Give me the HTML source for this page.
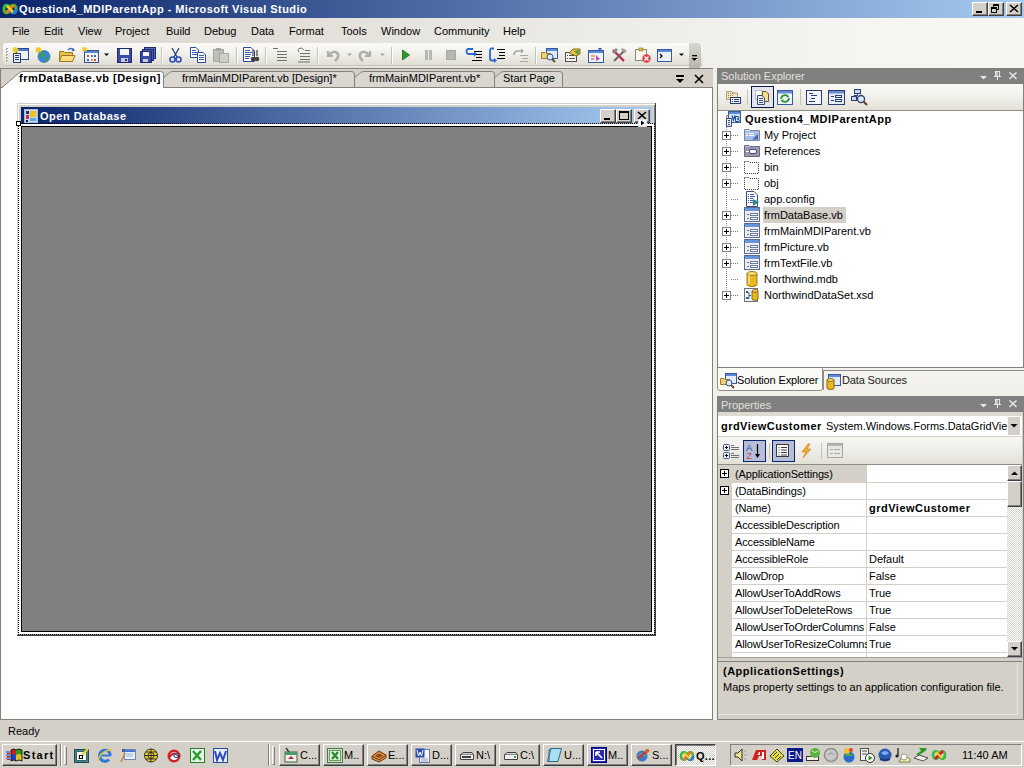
<!DOCTYPE html>
<html><head><meta charset="utf-8"><style>
*{box-sizing:border-box;margin:0;padding:0}
html,body{width:1024px;height:768px;overflow:hidden;background:#D4D0C8;font-family:"Liberation Sans",sans-serif;font-size:11px;color:#000}
.a{position:absolute}
.t{position:absolute;white-space:nowrap;line-height:16px;height:16px}
.b{font-weight:bold}
svg{position:absolute;overflow:visible}
.rz{position:absolute;background:#D4D0C8;border-top:1px solid #fff;border-left:1px solid #fff;border-right:1px solid #404040;border-bottom:1px solid #404040;box-shadow:inset -1px -1px 0 #808080}
</style></head><body>
<div class="a" style="left:0px;top:0px;width:1024px;height:18px;background:linear-gradient(to right,#0A246A,#A6CAF0)"></div>
<svg style="left:2px;top:3px" width="16" height="12" viewBox="0 0 16 12"><path d="M2 6 C2 1,7 1,8 6 C9 11,14 11,14 6 C14 1,9 1,8 6 C7 11,2 11,2 6Z" fill="none" stroke="#3CB83C" stroke-width="3"/><path d="M8 6 C9 11,14 11,14 6" fill="none" stroke="#2E7BD6" stroke-width="3"/><path d="M4 10 L12 2" stroke="#F07820" stroke-width="3"/><path d="M5 3 L11 9" stroke="#F8D020" stroke-width="2.5"/></svg>
<div class="t b" style="left:19px;top:1px;color:#fff;font-size:11px;letter-spacing:0.43px">Question4_MDIParentApp - Microsoft Visual Studio</div>
<div class="rz" style="left:972px;top:2px;width:16px;height:14px"></div>
<svg style="left:972px;top:2px" width="16" height="14" viewBox="0 0 16 14"><rect x="4" y="9" width="6" height="2" fill="#000"/></svg>
<div class="rz" style="left:988px;top:2px;width:16px;height:14px"></div>
<svg style="left:988px;top:2px" width="16" height="14" viewBox="0 0 16 14"><path d="M5.5 7.5 V2.5 H10.5 V7.5 H8.5 M5 3.5 H11" fill="none" stroke="#000"/><rect x="3.5" y="5.5" width="5" height="5" fill="#D4D0C8" stroke="#000"/><path d="M3 6.5 H9" stroke="#000"/></svg>
<div class="rz" style="left:1006px;top:2px;width:16px;height:14px"></div>
<svg style="left:1006px;top:2px" width="16" height="14" viewBox="0 0 16 14"><path d="M4 3l8 7M12 3l-8 7" stroke="#000" stroke-width="1.6"/></svg>
<div class="a" style="left:0px;top:18px;width:1024px;height:50px;background:linear-gradient(to right,#D8D5CD,#E8E6E0 45%,#F5F5F2 85%,#F6F6F3)"></div>
<div class="t " style="left:12px;top:23px;">File</div>
<div class="t " style="left:44px;top:23px;">Edit</div>
<div class="t " style="left:78px;top:23px;">View</div>
<div class="t " style="left:115px;top:23px;">Project</div>
<div class="t " style="left:166px;top:23px;">Build</div>
<div class="t " style="left:204px;top:23px;">Debug</div>
<div class="t " style="left:251px;top:23px;">Data</div>
<div class="t " style="left:289px;top:23px;">Format</div>
<div class="t " style="left:341px;top:23px;">Tools</div>
<div class="t " style="left:381px;top:23px;">Window</div>
<div class="t " style="left:434px;top:23px;">Community</div>
<div class="t " style="left:503px;top:23px;">Help</div>
<div class="a" style="left:3px;top:43px;width:700px;height:22px;border-radius:3px;background:linear-gradient(#FBFAF7,#F3F2ED 40%,#E0DED4);box-shadow:0 1px 0 #C8C5BB"></div>
<svg style="left:6px;top:47px" width="3" height="15" viewBox="0 0 3 15"><rect x="0" y="1" width="2" height="2" fill="#A8A69E"/><rect x="1" y="2" width="1" height="1" fill="#fff"/><rect x="0" y="4" width="2" height="2" fill="#A8A69E"/><rect x="1" y="5" width="1" height="1" fill="#fff"/><rect x="0" y="7" width="2" height="2" fill="#A8A69E"/><rect x="1" y="8" width="1" height="1" fill="#fff"/><rect x="0" y="10" width="2" height="2" fill="#A8A69E"/><rect x="1" y="11" width="1" height="1" fill="#fff"/><rect x="0" y="13" width="2" height="2" fill="#A8A69E"/><rect x="1" y="14" width="1" height="1" fill="#fff"/></svg>
<svg style="left:12px;top:47px" width="16" height="16" viewBox="0 0 16 16"><rect x="4.5" y="1.5" width="12" height="11" fill="#EEF2FA" stroke="#2C4A8A"/><rect x="5" y="2" width="11" height="2" fill="#4A7AD0"/><path d="M0.5 3 H6.5 M3.5 0 V6 M1.3 0.8 L5.7 5.2 M5.7 0.8 L1.3 5.2" stroke="#F0C820" stroke-width="1.3"/><rect x="1.5" y="6.5" width="7" height="9" fill="#E8EEF8" stroke="#2C3E6E"/><path d="M3 8.5h4M3 10.5h4M3 12.5h4" stroke="#2C3E6E"/></svg>
<svg style="left:35px;top:47px" width="16" height="16" viewBox="0 0 16 16"><circle cx="9" cy="9.5" r="6" fill="#3A86D8" stroke="#2A5A9A" stroke-width="0.6"/><path d="M5 6 Q8 5 10 7 Q9 10 6 11 Q4 9 5 6Z M11 11 Q13 9 14.5 10 Q13 14 10 15Z" fill="#3AA04A"/><path d="M0.5 3 H6.5 M3.5 0 V6 M1.3 0.8 L5.7 5.2 M5.7 0.8 L1.3 5.2" stroke="#F0C820" stroke-width="1.3"/></svg>
<svg style="left:59px;top:47px" width="16" height="16" viewBox="0 0 16 16"><path d="M0.5 4.5 H5 L6 5.5 H13.5 V14.5 H0.5Z" fill="#E8C050" stroke="#9A7A20"/><path d="M2.5 8.5 H16 L13.5 14.5 H0.5Z" fill="#F8DC80" stroke="#9A7A20"/><path d="M9 3 Q12 0 15 3" stroke="#3A6AB0" stroke-width="1.5" fill="none"/><path d="M14 1 L16 4 L12.5 4Z" fill="#3A6AB0"/></svg>
<svg style="left:82px;top:47px" width="17" height="16" viewBox="0 0 17 16"><rect x="2.5" y="3.5" width="14" height="12" fill="#EEF2FA" stroke="#3A4E80"/><rect x="3" y="4" width="13" height="2" fill="#5A86D0"/><rect x="5" y="8" width="2" height="2" fill="#E04040"/><rect x="9" y="8" width="2" height="2" fill="#40A040"/><rect x="12" y="8" width="2" height="2" fill="#4060D0"/><rect x="5" y="12" width="2" height="2" fill="#4060D0"/><rect x="9" y="12" width="2" height="2" fill="#E0A020"/><rect x="12" y="12" width="2" height="2" fill="#E04040"/><path d="M0 2 H5 M2.5 0 V4.5 M0.5 0.5 L4.5 4 M4.5 0.5 L0.5 4" stroke="#F0C820" stroke-width="1.1"/></svg>
<svg style="left:104px;top:53px" width="6" height="4" viewBox="0 0 6 4"><path d="M0 0.5 H5 L2.5 3Z" fill="#000"/></svg>
<svg style="left:117px;top:47px" width="15" height="16" viewBox="0 0 15 16"><rect x="0.5" y="1.5" width="14" height="14" fill="#3A4AA8" stroke="#202A6A"/><rect x="3" y="2" width="9" height="6" fill="#F4F4F8"/><rect x="4" y="11" width="7" height="4" fill="#C8CCE0"/><rect x="8" y="12" width="2" height="2" fill="#202A6A"/></svg>
<svg style="left:140px;top:47px" width="16" height="16" viewBox="0 0 16 16"><rect x="4.5" y="0.5" width="11" height="11" fill="#5A6AC0" stroke="#202A6A"/><rect x="2.5" y="2.5" width="11" height="11" fill="#4A5AB8" stroke="#202A6A"/><rect x="0.5" y="4.5" width="11" height="11" fill="#3A4AA8" stroke="#202A6A"/><rect x="3" y="5" width="6" height="4" fill="#F4F4F8"/><rect x="3" y="12" width="5" height="3" fill="#C8CCE0"/></svg>
<div class="a" style="left:161px;top:47px;width:1px;height:17px;background:#C5C2B8;border-right:1px solid #fff;width:2px"></div>
<svg style="left:169px;top:47px" width="13" height="16" viewBox="0 0 13 16"><path d="M3 1 L8 10 M10 1 L5 10" stroke="#2A3A8A" stroke-width="1.3"/><circle cx="3.5" cy="12.5" r="2.5" fill="none" stroke="#2A4AC0" stroke-width="1.6"/><circle cx="9.5" cy="12.5" r="2.5" fill="none" stroke="#2A4AC0" stroke-width="1.6"/></svg>
<svg style="left:190px;top:47px" width="16" height="16" viewBox="0 0 16 16"><path d="M0.5 0.5 H6 L8.5 3 V10.5 H0.5Z" fill="#fff" stroke="#2A4A9A"/><path d="M2 3.5h4M2 5.5h5M2 7.5h5" stroke="#3A5AB0"/><path d="M7.5 5.5 H13 L15.5 8 V15.5 H7.5Z" fill="#fff" stroke="#2A4A9A"/><path d="M9 8.5h5M9 10.5h5M9 12.5h5" stroke="#3A5AB0"/></svg>
<svg style="left:213px;top:47px" width="17" height="16" viewBox="0 0 17 16"><rect x="0.5" y="2.5" width="10" height="12" fill="#C0BEB8" stroke="#A8A6A0"/><rect x="3" y="1" width="5" height="3" fill="#A8A6A0"/><rect x="6.5" y="6.5" width="9" height="9" fill="#D0CEC8" stroke="#A8A6A0"/></svg>
<div class="a" style="left:236px;top:47px;width:1px;height:17px;background:#C5C2B8;border-right:1px solid #fff;width:2px"></div>
<svg style="left:243px;top:47px" width="17" height="16" viewBox="0 0 17 16"><path d="M0.5 0.5 H8 L11.5 4 V14.5 H0.5Z" fill="#fff" stroke="#2A4A9A"/><path d="M2 3.5h5M2 5.5h7M2 7.5h6M2 9.5h5M2 11.5h4" stroke="#3A5AB0"/><circle cx="10" cy="12" r="2.3" fill="#404040"/><circle cx="14" cy="12" r="2.3" fill="#404040"/><path d="M10 9 V3 M14 9 V3" stroke="#404040" stroke-width="1.2"/></svg>
<div class="a" style="left:265px;top:47px;width:1px;height:17px;background:#C5C2B8;border-right:1px solid #fff;width:2px"></div>
<svg style="left:273px;top:47px" width="14" height="16" viewBox="0 0 14 16"><path d="M0 1.5 H5 M4 4.5 H14 M4 7.5 H14 M4 10.5 H14 M4 13.5 H14" stroke="#707070" stroke-width="1"/></svg>
<svg style="left:296px;top:47px" width="14" height="16" viewBox="0 0 14 16"><path d="M3 5 Q1 3 3 1.5 Q6 0 8 3" stroke="#707070" fill="none"/><path d="M4 6.5 H14 M4 9.5 H14 M4 12.5 H14 M2 15 H14" stroke="#707070"/><path d="M9 3.5 H14" stroke="#707070"/></svg>
<div class="a" style="left:317px;top:47px;width:1px;height:17px;background:#C5C2B8;border-right:1px solid #fff;width:2px"></div>
<svg style="left:325px;top:47px" width="15" height="16" viewBox="0 0 15 16"><path d="M3 4 V9 H8" fill="none" stroke="#B0AEA8" stroke-width="2.2"/><path d="M4 8 Q10 2 13 7 Q14 11 10 14" fill="none" stroke="#B0AEA8" stroke-width="2.6"/></svg>
<svg style="left:347px;top:53px" width="6" height="4" viewBox="0 0 6 4"><path d="M0 0.5 H5 L2.5 3Z" fill="#A8A6A0"/></svg>
<svg style="left:358px;top:47px" width="15" height="16" viewBox="0 0 15 16"><path d="M12 4 V9 H7" fill="none" stroke="#B0AEA8" stroke-width="2.2"/><path d="M11 8 Q5 2 2 7 Q1 11 5 14" fill="none" stroke="#B0AEA8" stroke-width="2.6"/></svg>
<svg style="left:380px;top:53px" width="6" height="4" viewBox="0 0 6 4"><path d="M0 0.5 H5 L2.5 3Z" fill="#A8A6A0"/></svg>
<div class="a" style="left:391px;top:47px;width:1px;height:17px;background:#C5C2B8;border-right:1px solid #fff;width:2px"></div>
<svg style="left:401px;top:47px" width="10" height="16" viewBox="0 0 10 16"><path d="M1.5 3 L8.5 8 L1.5 13Z" fill="#2A9A2A" stroke="#1A6A1A" stroke-width="0.8"/></svg>
<svg style="left:424px;top:47px" width="9" height="16" viewBox="0 0 9 16"><rect x="1" y="3" width="3" height="10" fill="#B8B6B0"/><rect x="5" y="3" width="3" height="10" fill="#B8B6B0"/></svg>
<svg style="left:446px;top:47px" width="10" height="16" viewBox="0 0 10 16"><rect x="0.5" y="3.5" width="9" height="9" fill="#B8B6B0" stroke="#A8A6A0"/></svg>
<svg style="left:466px;top:47px" width="16" height="16" viewBox="0 0 16 16"><path d="M7 2 H2.5 Q0.5 2 0.5 4.5 Q0.5 7 3 7 H9" fill="none" stroke="#2A6AD0" stroke-width="1.8"/><path d="M8 4 L11 7 L8 10Z" fill="#2A6AD0"/><path d="M8 4.5 H16 M10 7.5 H16 M10 10.5 H16 M6 13.5 H16" stroke="#000" stroke-width="1.2"/></svg>
<svg style="left:489px;top:47px" width="16" height="16" viewBox="0 0 16 16"><path d="M5 1.5 H2.5 Q1 1.5 1 3.5 V11.5 Q1 13.5 3 13.5 H6" fill="none" stroke="#2A6AD0" stroke-width="1.8"/><path d="M5 11 L8 13.5 L5 16Z" fill="#2A6AD0"/><path d="M8 2.5 H16 M10 5.5 H16 M10 8.5 H16 M8 11.5 H16" stroke="#000" stroke-width="1.2"/></svg>
<svg style="left:512px;top:47px" width="16" height="16" viewBox="0 0 16 16"><path d="M2 8 Q2 4 6 4 H11" fill="none" stroke="#A8A6A0" stroke-width="1.6"/><path d="M9 1.5 L12 4 L9 6.5Z" fill="#A8A6A0"/><path d="M8 8.5 H16 M10 11.5 H16 M8 14.5 H16" stroke="#A8A6A0" stroke-width="1.2"/></svg>
<div class="a" style="left:535px;top:47px;width:1px;height:17px;background:#C5C2B8;border-right:1px solid #fff;width:2px"></div>
<svg style="left:541px;top:47px" width="17" height="16" viewBox="0 0 17 16"><rect x="5.5" y="1.5" width="11" height="10" fill="#E0EAFA" stroke="#3A5AA0"/><rect x="6" y="2" width="10" height="2" fill="#5A8AD8"/><path d="M0.5 5.5 H4 L5 6.5 H9.5 V11.5 H0.5Z" fill="#F0D070" stroke="#9A8030"/><circle cx="9" cy="10" r="3" fill="#D8ECFF" stroke="#405070"/><path d="M11 12 L14 15" stroke="#6A4A30" stroke-width="2"/></svg>
<svg style="left:564px;top:47px" width="17" height="16" viewBox="0 0 17 16"><rect x="1.5" y="5.5" width="11" height="9" fill="#F4F4F0" stroke="#505050"/><path d="M3 8.5h1M5 8.5h6M3 11.5h1M5 11.5h6" stroke="#505050"/><path d="M5 6 L9 2 H16 V7 L12 9Z" fill="#E8C040" stroke="#8A7020"/><path d="M10 4 L16 3 L14 8" fill="#5A9A3A"/></svg>
<svg style="left:588px;top:47px" width="16" height="16" viewBox="0 0 16 16"><rect x="0.5" y="3.5" width="15" height="12" fill="#EEF2FA" stroke="#3A5AA0"/><rect x="1" y="4" width="14" height="2" fill="#5A8AD8"/><path d="M3 9 H7 M3 12 H6" stroke="#D04040"/><path d="M8 8 L12 12 L8 14Z" fill="#C050C0"/><path d="M10 1 L14 1 L12 5Z" fill="#3A6AB0"/><path d="M4 7 L7 10 L4 10Z" fill="#E0C040"/></svg>
<svg style="left:611px;top:47px" width="16" height="16" viewBox="0 0 16 16"><path d="M2 3 L13 14" stroke="#C02040" stroke-width="2.2"/><path d="M14 3 L3 14" stroke="#6A6A6A" stroke-width="2"/><path d="M1 5 L5 1 L7 3 L3 7Z" fill="#8A8A8A"/><path d="M11 1 L16 4 L14 6 L10 3Z" fill="#A0A0A0"/></svg>
<svg style="left:635px;top:47px" width="16" height="16" viewBox="0 0 16 16"><rect x="0.5" y="2.5" width="11" height="11" fill="#F8F6EE" stroke="#8A8A80"/><rect x="4" y="1" width="4" height="3" fill="#E8C040" stroke="#8A7020" stroke-width="0.6"/><circle cx="11.5" cy="11.5" r="4.2" fill="#E04040"/><path d="M9.5 9.5 L13.5 13.5 M13.5 9.5 L9.5 13.5" stroke="#fff" stroke-width="1.3"/></svg>
<svg style="left:657px;top:47px" width="15" height="16" viewBox="0 0 15 16"><rect x="0.5" y="2.5" width="14" height="12" fill="#EEF2FA" stroke="#3A5AA0"/><rect x="1" y="3" width="13" height="2" fill="#5A8AD8"/><path d="M3 7 L5 9 L3 11" stroke="#000" fill="none" stroke-width="1.2"/></svg>
<svg style="left:679px;top:53px" width="6" height="4" viewBox="0 0 6 4"><path d="M0 0.5 H5 L2.5 3Z" fill="#000"/></svg>
<div class="a" style="left:689px;top:43px;width:12px;height:25px;background:linear-gradient(#D8D6CE,#B8B6AE);border-radius:0 3px 3px 0"></div>
<svg style="left:691px;top:55px" width="8" height="9" viewBox="0 0 8 9"><rect x="1" y="0" width="5" height="1.3" fill="#000"/><path d="M0.5 3 H6.5 L3.5 6Z" fill="#000"/><path d="M4 6 L6 4" stroke="#fff" stroke-width="0.8"/></svg>
<div class="a" style="left:0px;top:68px;width:713px;height:20px;background:#D4D0C8;border-top:1px solid #858178"></div>
<svg style="left:0px;top:0px" width="713" height="90" viewBox="0 0 713 90"><path d="M483 87.5 L499.5 73.5 Q501.5 71.5 504 71.5 L559.5 71.5 Q562.5 71.5 562.5 74 L562.5 87.5" fill="#DAD7D0" stroke="#858178" stroke-width="1"/><path d="M343 87.5 L359.5 73.5 Q361.5 71.5 364 71.5 L491.5 71.5 Q494.5 71.5 494.5 74 L494.5 87.5" fill="#DAD7D0" stroke="#858178" stroke-width="1"/><path d="M152 87.5 L168.5 73.5 Q170.5 71.5 173 71.5 L351.5 71.5 Q354.5 71.5 354.5 74 L354.5 87.5" fill="#DAD7D0" stroke="#858178" stroke-width="1"/><path d="M0 87.5 H713" stroke="#858178"/><path d="M2 87.5 L18.5 73.5 Q20.5 71.5 23 71.5 L160.5 71.5 Q163.5 71.5 163.5 74 L163.5 87.5" fill="#FFFFFF" stroke="#858178" stroke-width="1"/><rect x="3" y="87" width="160" height="2" fill="#fff"/></svg>
<div class="t b" style="left:19px;top:70px;letter-spacing:0.48px">frmDataBase.vb [Design]</div>
<div class="t " style="left:182px;top:70px;">frmMainMDIParent.vb [Design]*</div>
<div class="t " style="left:369px;top:70px;">frmMainMDIParent.vb*</div>
<div class="t " style="left:503px;top:70px;">Start Page</div>
<svg style="left:674px;top:74px" width="12" height="12" viewBox="0 0 12 12"><rect x="2" y="1" width="8" height="2" fill="#000"/><path d="M2 5 H10 L6 9Z" fill="#000"/></svg>
<svg style="left:692px;top:73px" width="14" height="12" viewBox="0 0 14 12"><path d="M3 2 L11 10 M11 2 L3 10" stroke="#000" stroke-width="1.6"/></svg>
<div class="a" style="left:0px;top:68px;width:1px;height:20px;background:#858178"></div>
<div class="a" style="left:0px;top:88px;width:713px;height:632px;background:#fff;border-left:1px solid #858178;border-right:1px solid #858178;border-bottom:1px solid #858178"></div>
<div class="a" style="left:17px;top:103px;width:639px;height:533px;background:#D4D0C8;border-top:1px solid #D4D0C8;border-left:1px solid #D4D0C8;border-right:1px solid #404040;border-bottom:1px solid #404040;box-shadow:inset 1px 1px 0 #fff,inset -1px -1px 0 #808080"></div>
<div class="a" style="left:21px;top:107px;width:631px;height:17px;background:linear-gradient(to right,#0A246A,#A6CAF0)"></div>
<svg style="left:24px;top:109px" width="14" height="14" viewBox="0 0 14 14"><rect x="0.5" y="0.5" width="13" height="13" fill="#C8D8F0" stroke="#A8B8D8"/><rect x="2" y="2" width="3" height="3" fill="#203060"/><rect x="2" y="6" width="3" height="4" fill="#D03040"/><rect x="2" y="11" width="2" height="2" fill="#102040"/><rect x="6" y="2" width="6" height="6" fill="#F0C020"/><rect x="6" y="9" width="6" height="3" fill="#60A8E8"/></svg>
<div class="t b" style="left:40px;top:108px;color:#fff;font-size:11px;letter-spacing:0.5px">Open Database</div>
<div class="rz" style="left:600px;top:109px;width:16px;height:14px"></div>
<svg style="left:600px;top:109px" width="16" height="14" viewBox="0 0 16 14"><rect x="4" y="9" width="6" height="2" fill="#000"/></svg>
<div class="rz" style="left:616px;top:109px;width:16px;height:14px"></div>
<svg style="left:616px;top:109px" width="16" height="14" viewBox="0 0 16 14"><rect x="3.5" y="2.5" width="9" height="8" fill="none" stroke="#000"/><path d="M3.5 3.5h9" stroke="#000"/></svg>
<div class="rz" style="left:634px;top:109px;width:16px;height:14px"></div>
<svg style="left:634px;top:109px" width="16" height="14" viewBox="0 0 16 14"><path d="M4 3l8 7M12 3l-8 7" stroke="#000" stroke-width="1.6"/></svg>
<div class="a" style="left:18px;top:124px;width:638px;height:512px;background:#fff"></div>
<div class="a" style="left:21px;top:126px;width:631px;height:506px;background:#808080;border:1px solid #000"></div>
<svg style="left:0;top:0" width="713" height="640"><path d="M18 123.5 H655" fill="none" stroke="#000" stroke-dasharray="1 1"/><path d="M654.5 124 V635 M18 634.5 H655" fill="none" stroke="#909090"/><path d="M18.5 124 V635 M654.5 124 V635 M18 634.5 H655" fill="none" stroke="#000" stroke-dasharray="1 1"/><path d="M655.5 103 V636 M17 635.5 H656" fill="none" stroke="#404040"/></svg>
<div class="a" style="left:16px;top:121px;width:5px;height:5px;background:#fff;border:1px solid #000"></div>
<div class="a" style="left:638px;top:119px;width:9px;height:8px;background:#fff;border:1px solid #E0E0E0"></div>
<svg style="left:638px;top:119px" width="9" height="8" viewBox="0 0 9 8"><path d="M3 1.5 L6.5 4 L3 6.5Z" fill="#000"/></svg>
<div class="a" style="left:713px;top:68px;width:4px;height:652px;background:#F0EFEA"></div>
<div class="a" style="left:717px;top:68px;width:307px;height:300px;background:#fff;border-left:1px solid #808080;border-bottom:1px solid #808080"></div>
<div class="a" style="left:717px;top:68px;width:307px;height:16px;background:#808080"></div>
<div class="t " style="left:721px;top:68px;color:#E2E0DA">Solution Explorer</div>
<svg style="left:980px;top:72px" width="8" height="8" viewBox="0 0 8 8"><path d="M0 4 H7 L3.5 7.5Z" fill="#E8E8E8"/></svg>
<svg style="left:993px;top:70px" width="9" height="11" viewBox="0 0 9 11"><path d="M2 1.5 H7 M2.5 1.5 V6.5 M6.5 1.5 V6.5 M1 6.5 H8 M4.5 6.5 V10" stroke="#E8E8E8" fill="none"/><rect x="3" y="2" width="2" height="4" fill="#C0C0C0"/></svg>
<svg style="left:1009px;top:72px" width="9" height="8" viewBox="0 0 9 8"><path d="M0.5 0.5 L7.5 7 M7.5 0.5 L0.5 7" stroke="#E8E8E8" stroke-width="1.5"/></svg>
<div class="a" style="left:718px;top:84px;width:306px;height:27px;background:linear-gradient(#FAF9F6,#F2F1EC 45%,#E3E1D7);border-bottom:1px solid #8E8C86"></div>
<svg style="left:725px;top:89px" width="16" height="15" viewBox="0 0 16 15"><path d="M1.5 2.5 H7 L8 4 H12.5 V10.5 H1.5Z" fill="#F3E7B8" stroke="#A89E7A"/><path d="M3 4.5h5M3 6.5h5M3 8.5h5" stroke="#8A8470" stroke-dasharray="1 1"/><rect x="5.5" y="8.5" width="10" height="6" fill="#E8EEF8" stroke="#2C3E6E"/><path d="M7 10.5h1M9 10.5h5M7 12.5h1M9 12.5h5" stroke="#2C3E6E"/></svg>
<div class="a" style="left:747px;top:89px;width:1px;height:16px;background:#C5C2B8"></div>
<div class="a" style="left:751px;top:86px;width:23px;height:22px;background:#E4E4EE;border:1px solid #0A1A4A"></div>
<svg style="left:754px;top:89px" width="16" height="16" viewBox="0 0 16 16"><path d="M1.5 1.5 H8 V10 H1.5Z" fill="#fff" stroke="#8090B0" stroke-dasharray="1 1"/><path d="M8.5 2.5 H12 L14.5 5 V12.5 H8.5Z" fill="#F8E090" stroke="#6A5A20"/><path d="M3.5 6.5 H8 L10.5 9 V15.5 H3.5Z" fill="#E8EEF8" stroke="#3A4E80"/><path d="M5 9.5h4M5 11.5h4M5 13.5h4" stroke="#3A4E80"/></svg>
<svg style="left:777px;top:90px" width="16" height="15" viewBox="0 0 16 15"><rect x="0.5" y="0.5" width="15" height="14" fill="#F0F4FC" stroke="#3A5A9A"/><rect x="1" y="1" width="14" height="2.5" fill="#6A8CD0"/><path d="M4 9 A4 4 0 0 1 11 6.5 M12 8 A4 4 0 0 1 5 10.5" fill="none" stroke="#2A9A2A" stroke-width="1.8"/><path d="M10 4.5 L12.5 7 L9.5 7.5Z M6 12.5 L3.5 10 L6.5 9.5Z" fill="#2A9A2A"/></svg>
<div class="a" style="left:800px;top:89px;width:1px;height:16px;background:#C5C2B8"></div>
<svg style="left:806px;top:90px" width="16" height="15" viewBox="0 0 16 15"><rect x="0.5" y="0.5" width="15" height="14" fill="#F0F4FC" stroke="#2C3E6E"/><path d="M3 3.5h4M5 5.5h6M5 8.5h4M3 11.5h6" stroke="#2C3E6E"/></svg>
<svg style="left:828px;top:90px" width="17" height="15" viewBox="0 0 17 15"><rect x="0.5" y="0.5" width="16" height="14" fill="#E8EEF8" stroke="#2C3E6E"/><rect x="1" y="1" width="15" height="2.5" fill="#6A8CD0"/><path d="M3 6.5h3M3 10.5h3" stroke="#2C3E6E"/><rect x="7.5" y="5.5" width="6" height="2" fill="none" stroke="#2C3E6E"/><rect x="7.5" y="9.5" width="6" height="2" fill="none" stroke="#2C3E6E"/></svg>
<svg style="left:851px;top:89px" width="17" height="17" viewBox="0 0 17 17"><rect x="3.5" y="0.5" width="6" height="4" fill="#C8D8F0" stroke="#2C3E6E"/><rect x="0.5" y="7.5" width="5" height="4" fill="#C8D8F0" stroke="#2C3E6E"/><path d="M6.5 4.5 V6.5 H3 V7.5" stroke="#2C3E6E" fill="none"/><circle cx="10" cy="10" r="3.5" fill="#D8ECFF" stroke="#304060" stroke-width="1.3"/><path d="M12.5 12.5 L16 16" stroke="#5A4030" stroke-width="2"/></svg>
<svg style="left:0;top:0" width="1024" height="400"><path d="M726.5 127 V303 M726.5 125 V127" stroke="#808080" stroke-dasharray="1 1"/></svg>
<svg style="left:0;top:0" width="1024" height="400"><path d="M731 135.5 H739" stroke="#808080" stroke-dasharray="1 1"/><rect x="722.5" y="131.5" width="8" height="8" fill="#fff" stroke="#808080"/><path d="M724 135.5H729 M726.5 133V138" stroke="#000"/><path d="M731 151.5 H739" stroke="#808080" stroke-dasharray="1 1"/><rect x="722.5" y="147.5" width="8" height="8" fill="#fff" stroke="#808080"/><path d="M724 151.5H729 M726.5 149V154" stroke="#000"/><path d="M731 167.5 H739" stroke="#808080" stroke-dasharray="1 1"/><rect x="722.5" y="163.5" width="8" height="8" fill="#fff" stroke="#808080"/><path d="M724 167.5H729 M726.5 165V170" stroke="#000"/><path d="M731 183.5 H739" stroke="#808080" stroke-dasharray="1 1"/><rect x="722.5" y="179.5" width="8" height="8" fill="#fff" stroke="#808080"/><path d="M724 183.5H729 M726.5 181V186" stroke="#000"/><path d="M731 199.5 H739" stroke="#808080" stroke-dasharray="1 1"/><path d="M731 215.5 H739" stroke="#808080" stroke-dasharray="1 1"/><rect x="722.5" y="211.5" width="8" height="8" fill="#fff" stroke="#808080"/><path d="M724 215.5H729 M726.5 213V218" stroke="#000"/><path d="M731 231.5 H739" stroke="#808080" stroke-dasharray="1 1"/><rect x="722.5" y="227.5" width="8" height="8" fill="#fff" stroke="#808080"/><path d="M724 231.5H729 M726.5 229V234" stroke="#000"/><path d="M731 247.5 H739" stroke="#808080" stroke-dasharray="1 1"/><rect x="722.5" y="243.5" width="8" height="8" fill="#fff" stroke="#808080"/><path d="M724 247.5H729 M726.5 245V250" stroke="#000"/><path d="M731 263.5 H739" stroke="#808080" stroke-dasharray="1 1"/><rect x="722.5" y="259.5" width="8" height="8" fill="#fff" stroke="#808080"/><path d="M724 263.5H729 M726.5 261V266" stroke="#000"/><path d="M731 279.5 H739" stroke="#808080" stroke-dasharray="1 1"/><path d="M731 295.5 H739" stroke="#808080" stroke-dasharray="1 1"/><rect x="722.5" y="291.5" width="8" height="8" fill="#fff" stroke="#808080"/><path d="M724 295.5H729 M726.5 293V298" stroke="#000"/></svg>
<div class="a" style="left:763px;top:207px;width:83px;height:16px;background:#D4D0C8"></div>
<svg style="left:725px;top:111px" width="16" height="16" viewBox="0 0 16 16"><path d="M1.5 4.5 H6 V14.5 H1.5Z" fill="#E0DCC0" stroke="#9A9478"/><rect x="3.5" y="0.5" width="12" height="11" fill="#D8E6FA" stroke="#3060A0"/><rect x="4" y="1" width="11" height="2" fill="#5A8AD8"/><path d="M7 4.5 L8.5 9 L10 4.5" stroke="#1A4A9A" fill="none" stroke-width="1.2"/><path d="M10.5 5.5 H13 Q14 5.5 14 7 Q14 8 12 8 Q14.5 8 14.5 9.5 Q14.5 10.5 13 10.5 H10.5Z" fill="none" stroke="#1A4A9A"/><path d="M1.5 7.5 H6.5 V15.5 H1.5Z" fill="#E8EEF8" stroke="#3A4E80"/><path d="M3 9.5h2M3 11.5h2M3 13.5h2" stroke="#3A4E80"/></svg>
<div class="t b" style="left:745px;top:111px;letter-spacing:0.5px">Question4_MDIParentApp</div>
<svg style="left:744px;top:127px" width="16" height="16" viewBox="0 0 16 16"><path d="M0.5 2.5 H5 L6 3.5 H15.5 V13.5 H0.5Z" fill="#DCE4F4" stroke="#7A88A0"/><rect x="1" y="4" width="14" height="9" fill="#A8BEE6"/><path d="M2 6.5h2M5 6.5h5M2 8.5h2M5 8.5h5" stroke="#fff"/><path d="M8 12.5 L14 7 V12.5Z" fill="#4A6AB0"/></svg>
<div class="t " style="left:764px;top:127px;">My Project</div>
<svg style="left:744px;top:143px" width="16" height="16" viewBox="0 0 16 16"><path d="M0.5 2.5 H5 L6 3.5 H15.5 V13.5 H0.5Z" fill="#C8C6D6" stroke="#6A6A80"/><rect x="1" y="4" width="14" height="9" fill="#9A98B0"/><rect x="5.5" y="6.5" width="7" height="4" rx="1.5" fill="#fff" stroke="#4A4A6A"/><path d="M2 8.5h3" stroke="#fff"/></svg>
<div class="t " style="left:764px;top:143px;">References</div>
<svg style="left:744px;top:159px" width="16" height="16" viewBox="0 0 16 16"><path d="M0.5 2.5 H5 L6 3.5 H14.5 V14.5 H0.5Z" fill="none" stroke="#000" stroke-dasharray="1 1" opacity="0.8"/></svg>
<div class="t " style="left:764px;top:159px;">bin</div>
<svg style="left:744px;top:175px" width="16" height="16" viewBox="0 0 16 16"><path d="M0.5 2.5 H5 L6 3.5 H14.5 V14.5 H0.5Z" fill="none" stroke="#000" stroke-dasharray="1 1" opacity="0.8"/></svg>
<div class="t " style="left:764px;top:175px;">obj</div>
<svg style="left:744px;top:191px" width="16" height="16" viewBox="0 0 16 16"><path d="M2.5 0.5 H10 L13.5 4 V15.5 H2.5Z" fill="#fff" stroke="#3A4E80"/><path d="M4 3.5h1M6 3.5h4M4 5.5h1M6 5.5h5M4 7.5h1M6 7.5h3M4 9.5h1M6 9.5h3M4 11.5h1M6 11.5h3" stroke="#3A5AA0"/><path d="M9 8 L15 11 L9 15Z" fill="#2A8A8A"/></svg>
<div class="t " style="left:764px;top:191px;">app.config</div>
<svg style="left:744px;top:207px" width="16" height="16" viewBox="0 0 16 16"><rect x="0.5" y="0.5" width="15" height="14" fill="#EEF0F4" stroke="#5A6A90"/><rect x="1" y="1" width="14" height="3" fill="#6A96DE"/><path d="M3 7.5h2M3 11.5h2" stroke="#5A6A90"/><rect x="6.5" y="6.5" width="7" height="2" fill="#fff" stroke="#6A7AA0"/><rect x="6.5" y="10.5" width="7" height="2" fill="#fff" stroke="#6A7AA0"/></svg>
<div class="t " style="left:764px;top:207px;">frmDataBase.vb</div>
<svg style="left:744px;top:223px" width="16" height="16" viewBox="0 0 16 16"><rect x="0.5" y="0.5" width="15" height="14" fill="#EEF0F4" stroke="#5A6A90"/><rect x="1" y="1" width="14" height="3" fill="#6A96DE"/><path d="M3 7.5h2M3 11.5h2" stroke="#5A6A90"/><rect x="6.5" y="6.5" width="7" height="2" fill="#fff" stroke="#6A7AA0"/><rect x="6.5" y="10.5" width="7" height="2" fill="#fff" stroke="#6A7AA0"/></svg>
<div class="t " style="left:764px;top:223px;">frmMainMDIParent.vb</div>
<svg style="left:744px;top:239px" width="16" height="16" viewBox="0 0 16 16"><rect x="0.5" y="0.5" width="15" height="14" fill="#EEF0F4" stroke="#5A6A90"/><rect x="1" y="1" width="14" height="3" fill="#6A96DE"/><path d="M3 7.5h2M3 11.5h2" stroke="#5A6A90"/><rect x="6.5" y="6.5" width="7" height="2" fill="#fff" stroke="#6A7AA0"/><rect x="6.5" y="10.5" width="7" height="2" fill="#fff" stroke="#6A7AA0"/></svg>
<div class="t " style="left:764px;top:239px;">frmPicture.vb</div>
<svg style="left:744px;top:255px" width="16" height="16" viewBox="0 0 16 16"><rect x="0.5" y="0.5" width="15" height="14" fill="#EEF0F4" stroke="#5A6A90"/><rect x="1" y="1" width="14" height="3" fill="#6A96DE"/><path d="M3 7.5h2M3 11.5h2" stroke="#5A6A90"/><rect x="6.5" y="6.5" width="7" height="2" fill="#fff" stroke="#6A7AA0"/><rect x="6.5" y="10.5" width="7" height="2" fill="#fff" stroke="#6A7AA0"/></svg>
<div class="t " style="left:764px;top:255px;">frmTextFile.vb</div>
<svg style="left:744px;top:271px" width="16" height="16" viewBox="0 0 16 16"><path d="M3 2.5 V13.5 A5 2 0 0 0 13 13.5 V2.5Z" fill="#E8B820" stroke="#9A7A10"/><ellipse cx="8" cy="2.5" rx="5" ry="2" fill="#F8E070" stroke="#9A7A10"/><rect x="4" y="4" width="2" height="9" fill="#F8E8A0" opacity="0.7"/></svg>
<div class="t " style="left:764px;top:271px;">Northwind.mdb</div>
<svg style="left:744px;top:287px" width="16" height="16" viewBox="0 0 16 16"><rect x="0.5" y="1.5" width="13" height="13" fill="#F4F6FA" stroke="#6A7080"/><path d="M3 5.5 H5 V11.5 H3 M5 8.5 H7" stroke="#2A5AA0" fill="none"/><rect x="2" y="4" width="2" height="2" fill="#2A5AA0"/><rect x="2" y="10" width="2" height="2" fill="#2A5AA0"/><path d="M8 4 V12 A3 1.3 0 0 0 14 12 V4Z" fill="#E8B820" stroke="#8A6A10"/><ellipse cx="11" cy="4" rx="3" ry="1.3" fill="#F8E070" stroke="#8A6A10"/></svg>
<div class="t " style="left:764px;top:287px;">NorthwindDataSet.xsd</div>
<div class="a" style="left:717px;top:368px;width:307px;height:28px;background:linear-gradient(#F4F3EF,#F0EFEA)"></div>
<svg style="left:0;top:0" width="1024" height="400"><path d="M1024 370.5 H823.5 V390" stroke="#8E8C86" fill="none"/><path d="M717.5 368 V388 Q717.5 390.5 720 390.5 H820 Q822.5 390.5 822.5 388 V368" fill="#FAFAF7" stroke="#8E8C86"/></svg>
<svg style="left:720px;top:373px" width="17" height="16" viewBox="0 0 17 16"><rect x="5.5" y="0.5" width="11" height="10" fill="#E0EAFA" stroke="#3A5AA0"/><rect x="6" y="1" width="10" height="2" fill="#5A8AD8"/><path d="M0.5 5.5 H4 L5 6.5 H9.5 V11.5 H0.5Z" fill="#F0D070" stroke="#9A8030"/><circle cx="9" cy="10" r="3" fill="#D8ECFF" stroke="#405070"/><path d="M11 12 L14 15" stroke="#6A4A30" stroke-width="2"/></svg>
<div class="t " style="left:737px;top:372px;letter-spacing:-0.15px">Solution Explorer</div>
<svg style="left:825px;top:374px" width="16" height="16" viewBox="0 0 16 16"><rect x="3.5" y="0.5" width="12" height="11" fill="#E0EAFA" stroke="#3A5AA0"/><rect x="4" y="1" width="11" height="2" fill="#5A8AD8"/><path d="M2 6 V14 A3.5 1.5 0 0 0 9 14 V6Z" fill="#E8B820" stroke="#8A6A10"/><ellipse cx="5.5" cy="6" rx="3.5" ry="1.5" fill="#F8E070" stroke="#8A6A10"/></svg>
<div class="t " style="left:842px;top:372px;letter-spacing:-0.15px;color:#222">Data Sources</div>
<div class="a" style="left:1023px;top:84px;width:1px;height:284px;background:#808080"></div>
<div class="a" style="left:717px;top:396px;width:307px;height:324px;background:#D4D0C8;border-left:1px solid #808080"></div>
<div class="a" style="left:717px;top:396px;width:307px;height:16px;background:#808080"></div>
<div class="t " style="left:721px;top:397px;color:#E2E0DA">Properties</div>
<svg style="left:980px;top:400px" width="8" height="8" viewBox="0 0 8 8"><path d="M0 4 H7 L3.5 7.5Z" fill="#E8E8E8"/></svg>
<svg style="left:993px;top:398px" width="9" height="11" viewBox="0 0 9 11"><path d="M2 1.5 H7 M2.5 1.5 V6.5 M6.5 1.5 V6.5 M1 6.5 H8 M4.5 6.5 V10" stroke="#E8E8E8" fill="none"/><rect x="3" y="2" width="2" height="4" fill="#C0C0C0"/></svg>
<svg style="left:1009px;top:400px" width="9" height="8" viewBox="0 0 9 8"><path d="M0.5 0.5 L7.5 7 M7.5 0.5 L0.5 7" stroke="#E8E8E8" stroke-width="1.5"/></svg>
<div class="a" style="left:718px;top:412px;width:306px;height:4px;background:#DDDAD2"></div>
<div class="a" style="left:718px;top:416px;width:304px;height:20px;background:#fff"></div>
<div class="t b" style="left:721px;top:418px;letter-spacing:0.45px">grdViewCustomer</div>
<div class="t" style="left:826px;top:418px;width:181px;overflow:hidden">System.Windows.Forms.DataGridView</div>
<div class="a" style="left:1008px;top:417px;width:12px;height:18px;background:#D4D0C8"></div>
<svg style="left:1010px;top:424px" width="8" height="4" viewBox="0 0 8 4"><path d="M0.5 0 H7.5 L4 3.5Z" fill="#000"/></svg>
<div class="a" style="left:1022px;top:412px;width:2px;height:308px;background:#D4D0C8"></div>
<div class="a" style="left:718px;top:437px;width:304px;height:28px;background:linear-gradient(#F7F6F2,#EFEEE9 45%,#E2E0D6);border-bottom:1px solid #8E8C86"></div>
<svg style="left:723px;top:443px" width="17" height="16" viewBox="0 0 17 16"><rect x="0.5" y="1.5" width="6" height="6" rx="1" fill="#E8ECF8" stroke="#4A5A7A"/><path d="M2 4.5h3M3.5 3v3" stroke="#000"/><rect x="0.5" y="9.5" width="6" height="6" rx="1" fill="#E8ECF8" stroke="#4A5A7A"/><path d="M2 12.5h3M3.5 11v3" stroke="#000"/><path d="M8 2.5h3M8 4.5h8M8 6.5h8M8 10.5h3M8 12.5h8M8 14.5h8" stroke="#6A7080"/></svg>
<div class="a" style="left:743px;top:440px;width:23px;height:22px;background:#B6BDD6;border:1px solid #0A246A"></div>
<svg style="left:746px;top:443px" width="17" height="17" viewBox="0 0 17 17"><text x="0" y="8" font-size="9.5" font-family="Liberation Sans" fill="#2A4AB0">A</text><text x="0.5" y="16" font-size="9" font-family="Liberation Sans" fill="#C04860">Z</text><path d="M11.5 1 V13" stroke="#000" stroke-width="1.2"/><path d="M9 11 H14 L11.5 15Z" fill="#000"/></svg>
<div class="a" style="left:769px;top:443px;width:1px;height:16px;background:#C5C2B8"></div>
<div class="a" style="left:772px;top:440px;width:23px;height:22px;background:#B6BDD6;border:1px solid #0A246A"></div>
<svg style="left:775px;top:443px" width="16" height="16" viewBox="0 0 16 16"><rect x="1.5" y="1.5" width="12" height="12" fill="#fff" stroke="#3A3A3A"/><path d="M3.5 4.5h1M6 4.5h6M3.5 7h1M6 7h6M3.5 9.5h1M6 9.5h6M3.5 12h1M6 12h6" stroke="#3A3A3A"/></svg>
<svg style="left:799px;top:443px" width="14" height="16" viewBox="0 0 14 16"><path d="M9 1 L3 9 H7 L4 15 L12 6 H8 L11 1Z" fill="#F0B030" stroke="#D07010" stroke-width="0.6"/></svg>
<div class="a" style="left:821px;top:443px;width:1px;height:16px;background:#C5C2B8"></div>
<svg style="left:827px;top:443px" width="16" height="15" viewBox="0 0 16 15"><rect x="0.5" y="0.5" width="15" height="14" fill="#E8E6E0" stroke="#A8A6A0"/><rect x="1" y="1" width="14" height="2" fill="#B8B6B0"/><path d="M3 6.5h3M3 10.5h3M7 6.5h6M7 10.5h6" stroke="#B0AEA8"/></svg>
<div class="a" style="left:718px;top:465px;width:289px;height:192px;background:#fff"></div>
<div class="a" style="left:718px;top:465px;width:14px;height:192px;background:#D4D0C8"></div>
<div class="a" style="left:732px;top:465px;width:134px;height:17px;background:#D4D0C8"></div>
<div class="a" style="left:0;top:0;width:1024px;height:657px;overflow:hidden"><svg style="left:0;top:0" width="1024" height="657"><path d="M866.5 465 V657" stroke="#D4D0C8"/><path d="M732 482.5 H1007" stroke="#D4D0C8"/><path d="M732 499.5 H1007" stroke="#D4D0C8"/><path d="M732 516.5 H1007" stroke="#D4D0C8"/><path d="M732 533.5 H1007" stroke="#D4D0C8"/><path d="M732 550.5 H1007" stroke="#D4D0C8"/><path d="M732 567.5 H1007" stroke="#D4D0C8"/><path d="M732 584.5 H1007" stroke="#D4D0C8"/><path d="M732 601.5 H1007" stroke="#D4D0C8"/><path d="M732 618.5 H1007" stroke="#D4D0C8"/><path d="M732 635.5 H1007" stroke="#D4D0C8"/><path d="M732 652.5 H1007" stroke="#D4D0C8"/><rect x="720.5" y="469.5" width="8" height="8" fill="#fff" stroke="#000"/><path d="M722 473.5H727 M724.5 471V476" stroke="#000"/><rect x="720.5" y="486.5" width="8" height="8" fill="#fff" stroke="#000"/><path d="M722 490.5H727 M724.5 488V493" stroke="#000"/></svg>
<div class="t" style="left:735px;top:466px;width:132px;overflow:hidden;letter-spacing:-0.15px">(ApplicationSettings)</div>
<div class="t" style="left:735px;top:483px;width:132px;overflow:hidden;letter-spacing:-0.15px">(DataBindings)</div>
<div class="t" style="left:735px;top:500px;width:132px;overflow:hidden;letter-spacing:-0.15px">(Name)</div>
<div class="t " style="left:869px;top:500px;"><b style="letter-spacing:0.5px">grdViewCustomer</b></div>
<div class="t" style="left:735px;top:517px;width:132px;overflow:hidden;letter-spacing:-0.15px">AccessibleDescription</div>
<div class="t" style="left:735px;top:534px;width:132px;overflow:hidden;letter-spacing:-0.15px">AccessibleName</div>
<div class="t" style="left:735px;top:551px;width:132px;overflow:hidden;letter-spacing:-0.15px">AccessibleRole</div>
<div class="t " style="left:869px;top:551px;">Default</div>
<div class="t" style="left:735px;top:568px;width:132px;overflow:hidden;letter-spacing:-0.15px">AllowDrop</div>
<div class="t " style="left:869px;top:568px;">False</div>
<div class="t" style="left:735px;top:585px;width:132px;overflow:hidden;letter-spacing:-0.15px">AllowUserToAddRows</div>
<div class="t " style="left:869px;top:585px;">True</div>
<div class="t" style="left:735px;top:602px;width:132px;overflow:hidden;letter-spacing:-0.15px">AllowUserToDeleteRows</div>
<div class="t " style="left:869px;top:602px;">True</div>
<div class="t" style="left:735px;top:619px;width:132px;overflow:hidden;letter-spacing:-0.15px">AllowUserToOrderColumns</div>
<div class="t " style="left:869px;top:619px;">False</div>
<div class="t" style="left:735px;top:636px;width:132px;overflow:hidden;letter-spacing:-0.15px">AllowUserToResizeColumns</div>
<div class="t " style="left:869px;top:636px;">True</div>
<div class="t" style="left:735px;top:653px;width:132px;overflow:hidden;letter-spacing:-0.15px">AllowUserToResizeRows</div>
<div class="t " style="left:869px;top:653px;">True</div>
</div>
<div class="a" style="left:1007px;top:465px;width:15px;height:192px;background-color:#F4F3F0;background-image:repeating-conic-gradient(#D4D0C8 0 25%,#fff 0 50%);background-size:2px 2px"></div>
<div class="rz" style="left:1007px;top:465px;width:15px;height:16px"></div>
<svg style="left:1007px;top:465px" width="15" height="16" viewBox="0 0 15 16"><path d="M4 10 H11 L7.5 6.5Z" fill="#000"/></svg>
<div class="rz" style="left:1007px;top:481px;width:15px;height:26px"></div>
<div class="rz" style="left:1007px;top:641px;width:15px;height:16px"></div>
<svg style="left:1007px;top:641px" width="15" height="16" viewBox="0 0 15 16"><path d="M4 6 H11 L7.5 9.5Z" fill="#000"/></svg>
<div class="a" style="left:718px;top:661px;width:304px;height:1px;background:#808080"></div>
<div class="t b" style="left:723px;top:663px;letter-spacing:0.5px">(ApplicationSettings)</div>
<div class="t " style="left:723px;top:679px;">Maps property settings to an application configuration file.</div>
<div class="a" style="left:1023px;top:412px;width:1px;height:308px;background:#808080"></div>
<div class="a" style="left:717px;top:719px;width:307px;height:1px;background:#808080"></div>
<div class="a" style="left:1017px;top:662px;width:1px;height:53px;background:#E8E6E0"></div>
<div class="a" style="left:719px;top:714px;width:299px;height:1px;background:#E8E6E0"></div>
<div class="a" style="left:718px;top:657px;width:305px;height:1px;background:#A0A0A0"></div>
<div class="t " style="left:8px;top:723px;">Ready</div>
<div class="a" style="left:0px;top:740px;width:1024px;height:28px;background:#D4D0C8"></div>
<div class="a" style="left:0px;top:741px;width:1024px;height:1px;background:#fff"></div>
<div class="rz" style="left:2px;top:744px;width:55px;height:22px"></div>
<svg style="left:6px;top:748px" width="17" height="15" viewBox="0 0 17 15"><path d="M5 2 Q8 0 10 2 V13 Q8 11 5 13Z" fill="#D02020"/><path d="M10 2 Q13 0 16 2 V13 Q13 11 10 13Z" fill="#20A020"/><path d="M5 7 Q8 5 10 7 V13 Q8 11 5 13Z" fill="#2040D0"/><path d="M10 7 Q13 5 16 7 V13 Q13 11 10 13Z" fill="#E0C020"/><path d="M0 4h4M0 7h4M0 10h4" stroke="#2040D0" stroke-width="1.2"/><path d="M1 5.5h3M1 8.5h3M1 11.5h3" stroke="#D02020"/><path d="M5 2 Q8 0 10 2 Q13 0 16 2 V13 Q13 11 10 13 Q8 11 5 13Z" fill="none" stroke="#000" stroke-width="0.8"/></svg>
<div class="t b" style="left:23px;top:747px;font-size:11px;letter-spacing:1.3px">Start</div>
<div class="a" style="left:60px;top:744px;width:2px;height:22px;background:#808080;border-right:1px solid #fff;width:2px"></div>
<div class="a" style="left:64px;top:746px;width:3px;height:19px;border-left:1px solid #fff;border-top:1px solid #fff;border-right:1px solid #808080;border-bottom:1px solid #808080"></div>
<svg style="left:74px;top:747px" width="16" height="16" viewBox="0 0 16 16"><rect x="0.5" y="2.5" width="14" height="13" fill="#3A8A9A" stroke="#1A4A5A"/><rect x="2.5" y="4.5" width="10" height="9" fill="#F8F8F0" stroke="#4A5A60"/><path d="M6 11 L14 1.5" stroke="#F0D030" stroke-width="2.2"/><path d="M5 12 L6.5 10" stroke="#303030" stroke-width="1.2"/><rect x="5.5" y="8.5" width="3" height="3" fill="#fff" stroke="#000"/></svg>
<svg style="left:97px;top:747px" width="16" height="16" viewBox="0 0 16 16"><path d="M13.5 8.5 A5.5 5.5 0 1 0 12 12.5" fill="none" stroke="#2A7AD8" stroke-width="3"/><path d="M3.5 8.5 H13.5" stroke="#2A7AD8" stroke-width="2"/><path d="M1 14 Q3 4 15 2.5" fill="none" stroke="#E8C040" stroke-width="1.5"/></svg>
<svg style="left:120px;top:747px" width="16" height="16" viewBox="0 0 16 16"><rect x="4.5" y="2.5" width="11" height="10" fill="#E8F0FC" stroke="#6A8AC0"/><rect x="5" y="3" width="10" height="2" fill="#4A7AD0"/><path d="M6 7h7M6 9h7" stroke="#9AB0D8"/><path d="M1 15 L5 6" stroke="#D08040" stroke-width="1.5"/><rect x="2" y="2" width="3" height="3" fill="#4A5AA0"/></svg>
<svg style="left:143px;top:747px" width="16" height="16" viewBox="0 0 16 16"><circle cx="8" cy="8.5" r="6.5" fill="#F0D020" stroke="#303030"/><path d="M1.5 8.5h13M8 2v13M3 5h10M3 12h10" stroke="#303030" stroke-width="1"/><circle cx="8" cy="8.5" r="3" fill="none" stroke="#303030"/></svg>
<svg style="left:166px;top:747px" width="16" height="16" viewBox="0 0 16 16"><circle cx="8" cy="9" r="6.5" fill="#D02020"/><circle cx="8" cy="9" r="4" fill="#fff"/><path d="M4 10 Q6 5 11 7" stroke="#D02020" stroke-width="2" fill="none"/><text x="7" y="11" font-size="8" font-weight="bold" font-family="Liberation Sans" fill="#2040A0">G</text></svg>
<svg style="left:189px;top:747px" width="16" height="16" viewBox="0 0 16 16"><rect x="1.5" y="1.5" width="14" height="14" fill="#E8F4E8" stroke="#2A7A2A"/><path d="M4 4 L12 13 M12 4 L4 13" stroke="#2A9A2A" stroke-width="2.5"/></svg>
<svg style="left:212px;top:747px" width="16" height="16" viewBox="0 0 16 16"><rect x="1.5" y="1.5" width="14" height="14" fill="#E8EEFC" stroke="#2A4AA0"/><path d="M3 4 L5 13 L8 6 L11 13 L14 4" stroke="#2A4AC0" stroke-width="2" fill="none"/></svg>
<div class="a" style="left:268px;top:744px;width:2px;height:22px;background:#808080;border-right:1px solid #fff"></div>
<div class="a" style="left:272px;top:746px;width:3px;height:19px;border-left:1px solid #fff;border-top:1px solid #fff;border-right:1px solid #808080;border-bottom:1px solid #808080"></div>
<div class="rz" style="left:279px;top:744px;width:41px;height:22px"></div>
<svg style="left:283px;top:747px" width="16" height="16" viewBox="0 0 16 16"><path d="M3 1 L6 5" stroke="#2A4A2A" stroke-width="1.5"/><rect x="2" y="5" width="12" height="10" fill="#F0F0E8" stroke="#406040"/><rect x="2" y="5" width="12" height="3" fill="#4A9A6A"/><path d="M5 12 L8 9 L11 12Z" fill="#C02040"/></svg>
<div class="t " style="left:300px;top:747px;">C...</div>
<div class="rz" style="left:323px;top:744px;width:41px;height:22px"></div>
<svg style="left:327px;top:747px" width="16" height="16" viewBox="0 0 16 16"><rect x="0.5" y="1.5" width="15" height="14" fill="#C8E0C8" stroke="#4A7A4A"/><rect x="2.5" y="3.5" width="11" height="10" fill="#E0F0E0" stroke="#6A9A6A"/><path d="M5 5 L11 12 M11 5 L5 12" stroke="#2A8A2A" stroke-width="2.2"/></svg>
<div class="t " style="left:344px;top:747px;">M..</div>
<div class="rz" style="left:367px;top:744px;width:41px;height:22px"></div>
<svg style="left:371px;top:747px" width="16" height="16" viewBox="0 0 16 16"><path d="M1 9 L8 4 L15 8 L15 11 L8 15 L1 12Z" fill="#D8904A" stroke="#6A3A10"/><path d="M1 9 L8 13 L15 8" fill="none" stroke="#6A3A10"/><path d="M4 9 L8 6.5 L12 8.5 L8 11Z" fill="#8A4A1A"/></svg>
<div class="t " style="left:388px;top:747px;">E...</div>
<div class="rz" style="left:411px;top:744px;width:41px;height:22px"></div>
<svg style="left:415px;top:747px" width="16" height="16" viewBox="0 0 16 16"><rect x="4.5" y="2.5" width="10" height="13" fill="#F4F6FC" stroke="#6A7AA0"/><rect x="0.5" y="1.5" width="9" height="9" fill="#2A4AB0"/><path d="M2 3 L3.5 9 L5 5 L6.5 9 L8 3" stroke="#fff" fill="none"/><path d="M6 12h7M6 14h7" stroke="#8A9AC0"/></svg>
<div class="t " style="left:432px;top:747px;">D...</div>
<div class="rz" style="left:455px;top:744px;width:41px;height:22px"></div>
<svg style="left:459px;top:747px" width="16" height="16" viewBox="0 0 16 16"><path d="M1.5 7.5 H14.5 V12.5 H1.5Z" fill="#F0F0F0" stroke="#404040"/><path d="M2 7.5 L4 5.5 H13 L14.5 7.5" fill="#D0D0D0" stroke="#404040"/><rect x="3" y="9" width="9" height="2" fill="#404040"/></svg>
<div class="t " style="left:476px;top:747px;">N:\</div>
<div class="rz" style="left:499px;top:744px;width:41px;height:22px"></div>
<svg style="left:503px;top:747px" width="16" height="16" viewBox="0 0 16 16"><path d="M1.5 7.5 H14.5 V12.5 H1.5Z" fill="#F0F0F0" stroke="#404040"/><path d="M2 7.5 L4 5.5 H13 L14.5 7.5" fill="#D0D0D0" stroke="#404040"/><rect x="11" y="9" width="2" height="2" fill="#40A040"/></svg>
<div class="t " style="left:520px;top:747px;">C:\</div>
<div class="rz" style="left:543px;top:744px;width:41px;height:22px"></div>
<svg style="left:547px;top:747px" width="16" height="16" viewBox="0 0 16 16"><path d="M4 1.5 H14.5 L11 14.5 H0.5Z" fill="#A8E0F0" stroke="#2A6A8A"/><path d="M4 1.5 L2 3 V15" stroke="#2A6A8A" fill="none"/></svg>
<div class="t " style="left:564px;top:747px;">U...</div>
<div class="rz" style="left:587px;top:744px;width:41px;height:22px"></div>
<svg style="left:591px;top:747px" width="16" height="16" viewBox="0 0 16 16"><rect x="0.5" y="0.5" width="15" height="15" fill="#2A2AB0" stroke="#000080"/><rect x="2.5" y="2.5" width="11" height="11" fill="none" stroke="#fff"/><path d="M5 5 L11 11 M5 5 V9 M5 5 H9" stroke="#fff" stroke-width="1.6"/></svg>
<div class="t " style="left:608px;top:747px;">M..</div>
<div class="rz" style="left:631px;top:744px;width:41px;height:22px"></div>
<svg style="left:635px;top:747px" width="16" height="16" viewBox="0 0 16 16"><circle cx="7" cy="9" r="5.5" fill="#3A7AC0"/><path d="M2 9 Q7 3 12 9" fill="#5AA0E0"/><path d="M3 11 L14 3" stroke="#C04020" stroke-width="2.2"/><circle cx="12" cy="4" r="2" fill="#E06030"/></svg>
<div class="t " style="left:652px;top:747px;">S...</div>
<div class="a" style="left:675px;top:744px;width:41px;height:22px;background-image:repeating-conic-gradient(#fff 0 25%,#D4D0C8 0 50%);background-size:2px 2px;border-top:1px solid #404040;border-left:1px solid #404040;border-right:1px solid #fff;border-bottom:1px solid #fff;box-shadow:inset 1px 1px 0 #808080"></div>
<svg style="left:679px;top:748px" width="16" height="16" viewBox="0 0 16 16"><path d="M2 8 C2 3,7 3,8 8 C9 13,14 13,14 8 C14 3,9 3,8 8 C7 13,2 13,2 8Z" fill="none" stroke="#3CB83C" stroke-width="2.6"/><path d="M8 8 C9 13,14 13,14 8" fill="none" stroke="#2E7BD6" stroke-width="2.6"/><path d="M4 12 L12 4" stroke="#F07820" stroke-width="2.6"/><path d="M5 5 L11 11" stroke="#F8D020" stroke-width="2"/></svg>
<div class="t b" style="left:696px;top:748px;letter-spacing:0.3px">Q...</div>
<div class="a" style="left:730px;top:744px;width:292px;height:22px;border-top:1px solid #808080;border-left:1px solid #808080;border-right:1px solid #fff;border-bottom:1px solid #fff"></div>
<svg style="left:733px;top:747px" width="16" height="16" viewBox="0 0 16 16"><path d="M2 6 H5 L9 2 V14 L5 10 H2Z" fill="#F0E890" stroke="#303030"/><path d="M11 5 L13 3 M11 8 H14 M11 11 L13 13" stroke="#A0A0A0"/></svg>
<svg style="left:751px;top:747px" width="16" height="16" viewBox="0 0 16 16"><path d="M1 13 L5 3 H15 V13 H11 V9 H8 L6 13Z" fill="#D02020"/><path d="M6.5 8 L8 5 H9 V8Z M11 5 H13 V12 H11Z" fill="#fff"/></svg>
<svg style="left:769px;top:747px" width="16" height="16" viewBox="0 0 16 16"><path d="M1 9 L8 2 L15 9 L8 15Z" fill="#E8E040" stroke="#404020"/><path d="M4 9 L8 5 M6 11 L10 7 M8 13 L12 9" stroke="#404020"/></svg>
<svg style="left:787px;top:747px" width="16" height="16" viewBox="0 0 16 16"><rect x="0" y="1" width="16" height="14" fill="#0A1A8A"/><text x="1" y="12" font-size="10" font-family="Liberation Sans" fill="#fff">EN</text></svg>
<svg style="left:805px;top:747px" width="16" height="16" viewBox="0 0 16 16"><rect x="1.5" y="9.5" width="12" height="4" fill="#F0F0E8" stroke="#303030"/><circle cx="10" cy="6" r="5" fill="#5AB040"/><path d="M7 4 Q10 7 13 4" stroke="#E0F0A0" fill="none"/></svg>
<svg style="left:823px;top:747px" width="16" height="16" viewBox="0 0 16 16"><circle cx="8" cy="8" r="6.5" fill="#C8C8C8" stroke="#909090" stroke-width="1.5"/><path d="M5 8 Q8 4 11 8" stroke="#909090" fill="none"/></svg>
<svg style="left:841px;top:747px" width="16" height="16" viewBox="0 0 16 16"><circle cx="8" cy="10" r="5.5" fill="#2A6AD0"/><path d="M3 9 Q8 4 13 9" fill="#40B040"/><circle cx="6" cy="4" r="3" fill="#F0C030"/><circle cx="10" cy="3" r="2" fill="#E04040"/></svg>
<svg style="left:859px;top:747px" width="16" height="16" viewBox="0 0 16 16"><rect x="1.5" y="1.5" width="8" height="12" fill="#F0F0F0" stroke="#505050"/><path d="M3 4h5M3 7h5" stroke="#505050"/><circle cx="11" cy="11" r="4.5" fill="#fff" stroke="#303030"/><path d="M9.5 8.5 L13.5 11 L9.5 13.5Z" fill="#2A8A2A"/></svg>
<svg style="left:877px;top:747px" width="16" height="16" viewBox="0 0 16 16"><circle cx="8" cy="8" r="6.5" fill="#2A5AB0"/><path d="M4 6 Q8 2 12 6 Q8 10 4 6" fill="#7AB0F0"/><path d="M3 12 Q8 14 13 12" stroke="#1A3A80" stroke-width="2" fill="none"/></svg>
<svg style="left:895px;top:747px" width="16" height="16" viewBox="0 0 16 16"><path d="M3 1 V9" stroke="#202020" stroke-width="1.3"/><circle cx="2" cy="9" r="1.6" fill="#202020"/><path d="M4 15 L8 7 L15 12 V15Z" fill="#F0F0A0" stroke="#808060"/><circle cx="9" cy="10" r="3" fill="#fff" stroke="#A0A0A0"/></svg>
<svg style="left:913px;top:747px" width="16" height="16" viewBox="0 0 16 16"><path d="M6 1 L14 1 L9 5 Z" fill="#2A9A2A"/><path d="M13 2 L4 8" stroke="#2A9A2A" stroke-width="2.4"/><path d="M1 11 L6 8 L15 11 L10 14Z" fill="#F0F0F0" stroke="#505050"/></svg>
<svg style="left:931px;top:747px" width="16" height="16" viewBox="0 0 16 16"><path d="M2 8 C2 3,7 3,8 8 C9 13,14 13,14 8 C14 3,9 3,8 8 C7 13,2 13,2 8Z" fill="none" stroke="#3CB83C" stroke-width="2.6"/><path d="M4 12 L12 4" stroke="#E02020" stroke-width="2.6"/><path d="M5 5 L11 11" stroke="#F8D020" stroke-width="2"/></svg>
<div class="t " style="left:962px;top:747px;">11:40 AM</div>
</body></html>
